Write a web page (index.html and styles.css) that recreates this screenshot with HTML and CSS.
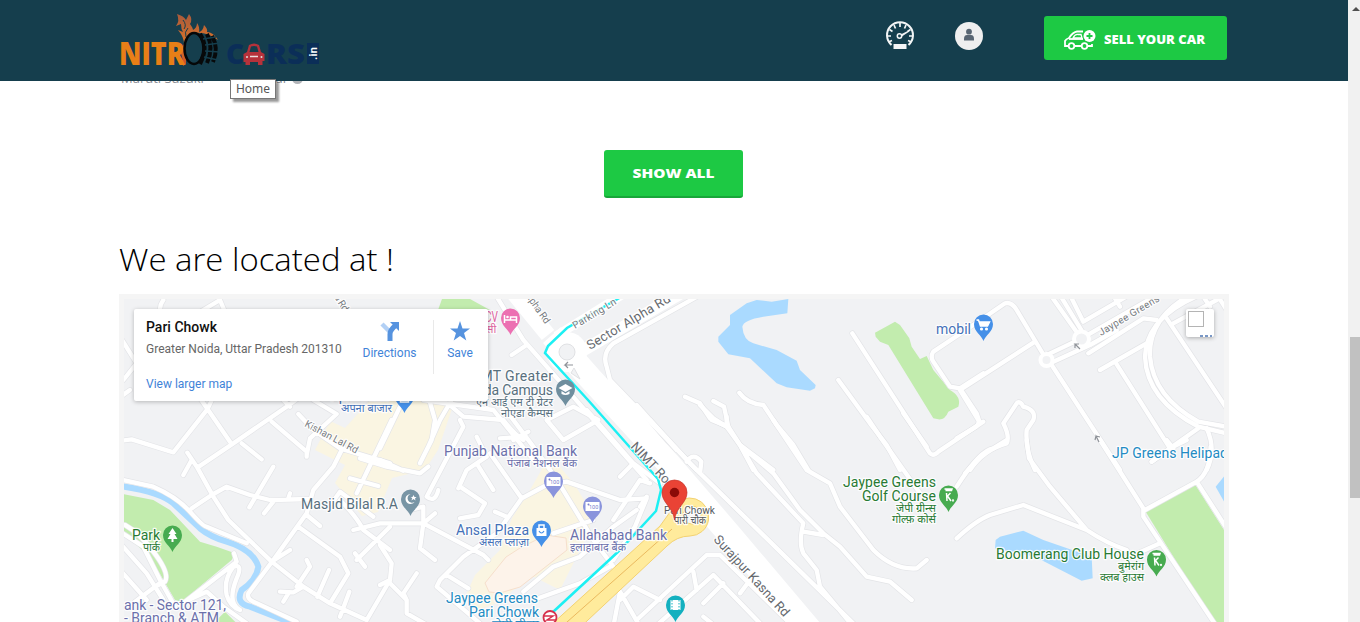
FILE: index.html
```html
<!DOCTYPE html>
<html lang="en">
<head>
<meta charset="utf-8">
<title>Nitro Carse</title>
<link rel="stylesheet" href="styles.css">
</head>
<body>
<div class="window">
<div class="page">
  <header class="header">
    <a class="logo" href="#">
      <svg width="202" height="56" viewBox="118 12 202 56">
        <defs><linearGradient id="fire" x1="0" y1="0" x2="0" y2="1"><stop offset="0" stop-color="#a85a3c"/><stop offset=".6" stop-color="#df7527"/><stop offset="1" stop-color="#c84c25"/></linearGradient></defs>
        <path fill="url(#fire)" d="M183 66Q183 58 180 50L184 44Q184 37 178 30L183 32Q181 29 181 24L176 26Q180 21 177 14Q184 16 186 20L189 14Q193 19 190 24Q193 28 193 30Q197 28 197 23Q200 27 199 32Q203 31 204 25Q208 29 207 32Q213 32 218 40Q206 31 194 33Q187 37 186 48V64Z"/>
        <path fill="none" stroke="#153e4d" stroke-width="1" d="M183 20Q187 25 184 29M186 37Q184 32 188 28"/>
        <text class="logo-nitro" x="119" y="64.500" textLength="66" lengthAdjust="spacingAndGlyphs">NITR</text>
        <ellipse cx="194" cy="48.500" rx="9.500" ry="15.500" class="tyre"/>
        <path class="tread" d="M200 34Q209 47 200 64M207 34Q214 48 207 63M212 36Q219 48 213 62"/>
        <path class="tread-cut" d="M203 39L216 37M205 45L220 43M205 51L220 52M204 57L218 60"/>
        <text class="logo-carse" x="226" y="63.500" textLength="18" lengthAdjust="spacingAndGlyphs">C</text>
        <text class="logo-carse" x="266" y="63.500" textLength="39" lengthAdjust="spacingAndGlyphs">RS</text>
        <path d="M307 43H319V64H307Z" fill="#0b2e58"/>
        <path fill="#b6323b" d="M247 52L249 45Q254 42 259 45L261 52 264.500 54V61H262.500V65H258V62H250V65H245.500V62H243.500V54Z"/>
        <path fill="#173e4d" d="M249.500 52L251 46.500Q254 45.500 257 46.500L258.500 52Z"/>
        <path d="M250 56.500H258" stroke="#edd" stroke-width="1.500"/><circle cx="247" cy="57" r="1" fill="#ddd"/><circle cx="261.500" cy="57" r="1" fill="#ddd"/>
        <text class="logo-in" transform="translate(317 60) rotate(-90)" textLength="13">.in</text>
      </svg>
    </a>
    <nav class="tools">
      <svg class="gauge" width="30" height="29" viewBox="0 0 30 29" fill="none" stroke="#f3f5f6">
        <path stroke-width="2" d="M6.500 24A13 13 0 1 1 23.500 24"/>
        <path stroke-width="1.700" d="M2 15H6M4.500 8.500L7.500 10.500M9 4L10.500 7.500M15 2V6M21 4L19.500 7.500M25.500 8.500L22.500 10.500M28 15H24M3.500 21L7 19.500M26.500 21L23 19.500"/>
        <circle cx="14.500" cy="15" r="2.200" stroke-width="1.500"/><path stroke-width="1.300" d="M16 14L24 10M16.500 15L24 10"/>
        <path fill="#f3f5f6" stroke="none" d="M8.500 23H21.500V28H8.500Z"/>
      </svg>
      <svg class="user" width="28" height="28" viewBox="0 0 28 28"><circle cx="14" cy="14" r="14" fill="#efefef"/><circle cx="14" cy="9.700" r="2.900" fill="#596673"/><path fill="#596673" d="M9 17Q9 13 12 13H16Q19 13 19 17V18.500H9Z"/></svg>
      <a class="sell" href="#">
        <svg width="34" height="21" viewBox="0 0 34 21" fill="none" stroke="#fff" stroke-width="1.800">
          <path d="M5 17H2V12Q3 10 6 9Q10 3 14 2.500H20M12 17H18M25 17H29V15"/><path d="M10 9Q12 5 15 5.500H18L19 9Z" stroke-width="1.300"/><path d="M6 10H20"/>
          <circle cx="8.500" cy="17" r="2.800"/><circle cx="21.500" cy="17" r="2.800"/><circle cx="26.500" cy="7" r="6" fill="#fff" stroke="none"/><path stroke="#1dc944" d="M23.500 7H29.500M26.500 4V10"/>
        </svg>
        <svg width="104" height="20" viewBox="0 0 104 20"><text class="button-text" x="0" y="14.500" textLength="101" lengthAdjust="spacingAndGlyphs">SELL YOUR CAR</text></svg>
      </a>
    </nav>
    <span class="tooltip">Home</span>
  </header>
  <main class="main">
    <div class="listing"><span class="make">Maruti Suzuki</span><span class="place">Bazaar</span><i class="dot"></i></div>
    <a class="show-all" href="#"><svg width="84" height="20" viewBox="0 0 84 20"><text class="button-text" x="0.500" y="14.700" textLength="82" lengthAdjust="spacingAndGlyphs">SHOW ALL</text></svg></a>
    <h2 class="title"><svg width="290" height="46" viewBox="0 0 290 46"><text x="0" y="33" textLength="275" lengthAdjust="spacingAndGlyphs">We are located at !</text></svg></h2>
    <section class="map">
      <svg class="canvas" width="1100" height="323" viewBox="124 299 1100 323">
        <defs>
          <g id="minor">
            <g transform="translate(110 400) scale(.33333)">
              <path d="M30 123L65 118 190 157 292 28 315 -20M260 -20L360 125M262 203L370 130 530 20 570 -10M520 0L540 20M395 130L455 178M485 65L590 155V170M590 165L600 115 680 42 610 0M565 42L610 90 690 145 840 190M232 158L262 203 310 290 355 360 485 485 580 560 660 610 770 660M220 225L245 180M30 238L130 260Q200 290 240 335T290 380L410 430M245 325L305 285 350 260 420 285 480 300 600 297M418 322L490 200M462 340L490 305M535 295L540 280M700 140L670 200 610 270 590 340 490 480 415 580Q410 595 430 605L560 665M565 380L690 470 715 520 660 610M590 345L630 378M485 485L540 450M560 560L600 500 590 480M510 575L550 577 580 560M535 580L520 605M622 590L657 510M690 650L718 575M770 660L840 540M845 60L740 280M720 235L805 258M665 310L690 275 790 350M690 300Q740 350 760 390L840 450M840 380L740 480M735 460L765 500M225 605L380 485 372 460M45 375Q90 400 130 455Q180 520 165 545L145 555M30 395L100 440 150 540 195 620M30 430L110 520 160 600M30 510L110 600M75 605L155 545M370 500Q340 540 350 585Q360 620 390 630M370 500Q400 490 380 535Q350 610 390 630M235 600L290 575 340 620 410 670"/>
              <path d="M160 -300Q130 -260 190 -220M330 -300L380 -180M230 -240L330 -300M30 -190L80 -110 40 -60M-10 20L60 -30"/>
            </g>
            <g transform="translate(380 400) scale(.33333)">
              <path d="M145 -10L165 60 155 120 120 190M240 60L250 80 140 290Q165 310 175 270M215 0L180 60 145 140M215 20L250 50 370 60Q400 100 430 120M60 20L0 145M0 180L70 212M-60 175L20 200 120 220 145 200M360 115L430 110M370 20L460 140 525 230 610 370 640 420 700 500M330 160L425 295 350 400 250 470 180 540 170 560 300 670M290 110L320 170 260 210 235 265M240 260L315 310 295 345 240 355M290 190L340 270M425 295L500 255 560 245 720 300 800 295 765 380 700 480M345 335L380 350M-80 390L0 370 130 370 310 465 325 480M130 370L165 340M130 370L120 445 165 480M90 330L130 320 130 370M0 435L35 490 30 540 0 555M30 550L80 600 70 580 110 520M80 600L80 640 150 680M200 525L265 565M500 60L550 120 655 60 580 20 500 60M620 30L760 190 840 250M720 230L760 190M430 575L520 500 600 470 700 380 770 330M460 600L600 550 690 500M700 680L720 575 780 680M720 600L760 560 840 600M520 400L580 380 640 360"/>
            </g>
            <g transform="translate(480 290) scale(.33333)">
              <path d="M50 20L130 150 350 400 500 570M95 195L140 165M660 15L400 160Q365 190 380 230L390 270 650 540M470 345L590 480M615 320L660 340 690 385 740 410M-170 330L40 360 80 410 160 510M100 450L145 425"/>
            </g>
            <g transform="translate(700 290) scale(.33333)">
              <path d="M0 345L40 385 80 410 120 465 160 540M120 465L220 540M40 333L72 350 85 410M118 308Q140 340 190 345L230 405 280 465 325 540M415 270L510 400 560 465 600 540M457 130L690 490Q700 500 715 485L850 395M820 105L700 185Q690 200 700 215L750 290 780 295 850 250M780 295L830 370 840 400M795 550L840 500"/>
            </g>
            <g transform="translate(960 290) scale(.33333)">
              <path d="M0 300L225 155M40 105L135 40Q155 35 170 60L260 210M250 200L365 145 600 10M270 220L390 165 470 120M275 225L480 540M275 20L360 140M330 15L370 95 550 -10M300 15L370 130M385 190L550 85 590 90M480 50L465 25M420 240L560 160M465 215L630 475 715 415M575 515L630 475M620 85L800 355M640 100L770 30M730 20L750 50M775 20L800 60M740 415Q770 480 740 540M0 300L55 390Q60 405 40 415L-10 445M30 540Q70 480 140 460Q150 440 130 400L170 340Q180 330 190 350Q230 360 220 390L200 420Q195 480 225 540"/>
              <path d="M720 15Q560 80 555 200Q560 330 715 410L800 430M690 15Q565 85 570 200Q580 320 715 395L800 410"/>
            </g>
            <g transform="translate(960 440) scale(.33333)">
              <path d="M-10 140Q60 30 100 25L140 0M200 0L207 55 270 140 380 270M-10 295Q50 240 90 225L190 195 380 270Q440 310 500 330M500 355L600 310M420 0L550 205V230L770 560M555 210L710 125Q750 100 752 20M710 125L800 265M575 65L640 20 680 0M620 0L640 25"/>
            </g>
            <g transform="translate(640 420) scale(.33333)">
              <path d="M215 0L265 20 300 75 350 160 490 310Q475 370 490 400L530 450 540 500 640 620M260 -10V15M300 75L400 160 480 270 550 340 600 380 680 470 750 485 815 540M490 335L550 345M400 0L500 150 570 190 600 260 700 390Q760 450 830 445L860 420M680 -10L720 50 840 220M790 -20L860 80M-10 600L200 405H240L460 620M50 616L220 465 370 620M160 455L170 510M250 490L190 550M330 480L300 520M190 590L240 630M30 0L150 130 650 620M85 90L-40 -60M180 160L184 125Q160 95 140 125M-80 300L0 180 30 190M0 260L20 230"/>
            </g>
          </g>
          <g id="major">
            <path stroke-width="16" d="M508 286L548 335"/>
            <path stroke-width="24" d="M552 335L590 378 668 463 730 535 812 632"/>
            <path stroke-width="12" d="M570 358L690 288"/>
            <path stroke-width="9" d="M556 336L625 293"/>
          </g>
          <path id="pin" d="M0 14C-2 8 -9.500 5 -9.500 -3A9.500 9.500 0 1 1 9.500 -3C9.500 5 2 8 0 14Z"/>
        </defs>
        <rect x="124" y="299" width="1100" height="323" fill="#f1f2f4"/>
        <g fill="#faf5e2">
          <path d="M330 421L345 428 370 400H455L438 450 425 470 392 478 378 512 362 516 335 483 345 465 315 450Z"/>
          <path d="M550 455L575 485 590 510 590 530 560 590 530 575 500 602 478 610 466 595 475 575 500 550 512 518 530 490Z"/>
        </g>
        <g fill="#c2ecae">
          <path transform="translate(110 400) scale(.33333)" d="M40 282L130 300 180 330 270 425 320 440 375 460 365 480 215 605 195 600 120 470 40 400ZM310 670L345 635 380 670Z"/>
          <path d="M438 310L442 299H470L490 310Z"/>
          <path transform="translate(700 290) scale(.33333)" d="M525 128L585 95 600 105 628 145 635 170 660 207 680 198 700 240 750 300Q785 320 775 350L745 365Q735 390 715 388L700 385 565 165 540 155 527 140Z"/>
          <path transform="translate(960 440) scale(.33333)" d="M557 215L705 133 795 275V546H760Z"/>
        </g>
        <g fill="#aadaff">
          <path transform="translate(700 290) scale(.33333)" d="M265 27L262 70 190 80Q130 90 127 110Q130 150 160 160L230 180 290 212 300 240 347 285 345 295 330 302 260 292 230 280 150 205 85 193 55 155V140L90 105V75L140 40 170 30 215 35Z"/>
          <path transform="translate(960 440) scale(.33333)" d="M105 325L107 300 120 290 190 272 250 300 395 350 398 415 365 422 225 350ZM767 140L795 106V190Z"/>
        </g>
        <path class="river" transform="translate(110 400) scale(.33333)" d="M30 258Q150 275 190 310L270 385Q300 410 350 425Q430 450 445 500Q440 540 395 570Q375 610 420 620L560 675"/>
        <path fill="#fdf3ea" stroke="#f6dfcc" d="M485 583L506 557 520 548 546 535 566 538 567 550 520 587 500 593 489 592Z"/>
        <use href="#minor" class="casing"/>
        <use href="#minor" class="road"/>
        <g class="avenue"><use href="#major"/><circle cx="567" cy="352" r="20" fill="#fff" stroke="none"/></g>
        <circle cx="567" cy="352" r="8" class="island"/>
        <path d="M574 368L580 379 571 373Z" class="island"/>
        <circle cx="1046.500" cy="360" r="6" class="ring"/><circle cx="1081.500" cy="339" r="7.500" class="ring"/>
        <path fill="#ffeb9c" stroke="#f3d272" d="M540 635L660 526 673 508A19 19 0 1 1 690 536Q677 536 667 546L572 635Z"/>
        <circle cx="692" cy="515" r="9" fill="#f4f4f2" stroke="#f3d272"/>
        <path fill="none" stroke="#eab95f" d="M672 529L558 630"/>
        <path class="route" d="M621 297L567 328 548 346 545 353 588 400 658 479 661 490 656 511 620 550 553 612"/>
        <g fill="none" stroke="#8f9399" stroke-width="1.200"><path d="M573 365H565L568 362M565 365L568 368M1080 349L1075 344H1079M1075 344V348M1099 442L1096 436 1095 440M1096 436L1100 437"/></g>

        <g class="labels">
          <g class="street">
            <text transform="translate(304 426) rotate(28)" textLength="59">Kishan Lal Rd</text>
            <text transform="translate(334 297) rotate(58)" textLength="18">a Rd</text>
            <text transform="translate(524 294) rotate(55)" textLength="37">Alpha Rd</text>
            <text transform="translate(575 329) rotate(-31)" textLength="49">Parking Ln</text>
            <text transform="translate(1101 336) rotate(-31)" textLength="69">Jaypee Greens</text>
          </g>
          <g class="avenue-name">
            <text transform="translate(590 350) rotate(-31)" textLength="95">Sector Alpha Rd</text>
            <text transform="translate(630 447) rotate(47)" textLength="66">NIMT Road</text>
            <text transform="translate(713 540) rotate(47.500)" textLength="105">Surajpur Kasna Rd</text>
          </g>
          <g fill="#58707e">
            <text x="301" y="509" textLength="97">Masjid Bilal R.A</text>
            <text x="466" y="381" textLength="87">NIMT Greater</text>
            <text x="463" y="395" textLength="90">Noida Campus</text>
            <text class="hi" x="476" y="406" textLength="77" lengthAdjust="spacingAndGlyphs">एन आई एम टी ग्रेटर</text>
            <text class="hi" x="501" y="417" textLength="52" lengthAdjust="spacingAndGlyphs">नोएडा कैम्पस</text>
          </g>
          <g fill="#6b70ab">
            <text x="444" y="456" textLength="133">Punjab National Bank</text>
            <text class="hi" x="507" y="466.500" textLength="70" lengthAdjust="spacingAndGlyphs">पंजाब नैशनल बैंक</text>
            <text x="570" y="540" textLength="97">Allahabad Bank</text>
            <text class="hi" x="570" y="550.500" textLength="56" lengthAdjust="spacingAndGlyphs">इलाहाबाद बैंक</text>
            <text x="124" y="610" textLength="102">ank - Sector 121,</text>
            <text x="124" y="623" textLength="95">- Branch &amp; ATM</text>
          </g>
          <g fill="#4471b8">
            <text x="331" y="401" textLength="60">Apna Bazar</text>
            <text class="hi" x="341" y="411.500" textLength="51" lengthAdjust="spacingAndGlyphs">अपना बाजार</text>
            <text x="456" y="535" textLength="73">Ansal Plaza</text>
            <text class="hi" x="479" y="545.500" textLength="50" lengthAdjust="spacingAndGlyphs">अंसल प्लाज़ा</text>
            <text x="936" y="334" textLength="35">mobil</text>
          </g>
          <g fill="#238bc3">
            <text x="446" y="603" textLength="92">Jaypee Greens</text>
            <text x="469" y="617" textLength="70">Pari Chowk</text>
            <text class="hi" x="492" y="628" textLength="47" lengthAdjust="spacingAndGlyphs">जेपी ग्रीन्स</text>
            <text x="1112" y="458" textLength="116">JP Greens Helipad</text>
          </g>
          <g fill="#287a33">
            <text x="132" y="540" textLength="28">Park</text>
            <text class="hi" x="143" y="550.500" textLength="17" lengthAdjust="spacingAndGlyphs">पार्क</text>
            <text x="843" y="487" textLength="93">Jaypee Greens</text>
            <text x="862" y="501" textLength="74">Golf Course</text>
            <text class="hi" x="896" y="512" textLength="40" lengthAdjust="spacingAndGlyphs">जेपी ग्रीन्स</text>
            <text class="hi" x="892" y="523" textLength="44" lengthAdjust="spacingAndGlyphs">गोल्फ़ कोर्स</text>
            <text x="996" y="559" textLength="148">Boomerang Club House</text>
            <text class="hi" x="1118" y="569.500" textLength="26" lengthAdjust="spacingAndGlyphs">बुमेरांग</text>
            <text class="hi" x="1100" y="580.500" textLength="44" lengthAdjust="spacingAndGlyphs">क्लब हाउस</text>
          </g>
          <g fill="#dd63a0"><text x="485" y="322" textLength="13" lengthAdjust="spacingAndGlyphs">CV</text><text class="hi" x="486" y="333">सी</text></g>
          <g fill="#555a5f"><text class="small" x="664" y="514" textLength="51" lengthAdjust="spacingAndGlyphs">Pari Chowk</text><text class="hi" x="674" y="523.500" textLength="32" lengthAdjust="spacingAndGlyphs">पारी चौक</text></g>
        </g>

        <g class="icon-line">
          <g transform="translate(172.500 538)"><use href="#pin" fill="#47ab50"/><path fill="#fff" stroke="none" d="M0 -10L4 -4H2L5 1H1V4H-1V1H-5L-2 -4H-4Z"/></g>
          <g transform="translate(410.500 502)"><use href="#pin" fill="#7895a5"/><path fill="#fff" stroke="none" d="M0 -8A5 5 0 1 0 4 0A4.500 4.500 0 1 1 0 -8M3 -7L4 -5 6 -5 4.500 -3.500 5 -1.500 3 -3 1 -1.500 1.700 -4 0 -5H2Z"/></g>
          <g transform="translate(404.500 399)"><use href="#pin" fill="#4590e8"/><path d="M-4 -1V3H4V-1"/></g>
          <g transform="translate(510.500 321)"><use href="#pin" fill="#ec70b2"/><path d="M-6 -6V2M-6 -1H6V2M6 -1V-4H0V-1"/><circle cx="-3" cy="-4" r="1.300" fill="#fff" stroke="none"/></g>
          <g transform="translate(565.500 392)"><use href="#pin" fill="#6f8e9e"/><path fill="#fff" stroke="none" d="M0 -8L7 -4 0 0 -7 -4ZM-4 -1L0 1.500 4 -1V2Q0 4 -4 2Z"/></g>
          <g transform="translate(553.500 484)"><use href="#pin" fill="#8a94dc"/><path fill="#fff" stroke="none" d="M-7 -7H7V2H-7Z"/><text class="note" x="-3.500" y="0">100</text><circle cx="-4" cy="-4.500" r="1" fill="#7780cc" stroke="none"/></g>
          <g transform="translate(592.500 509)"><use href="#pin" fill="#8a94dc"/><path fill="#fff" stroke="none" d="M-7 -7H7V2H-7Z"/><text class="note" x="-3.500" y="0">100</text><circle cx="-4" cy="-4.500" r="1" fill="#7780cc" stroke="none"/></g>
          <g transform="translate(541.500 533)"><use href="#pin" fill="#4590e8"/><path fill="#fff" stroke="none" d="M-5 -5H5V3H-5Z"/><path d="M-2.500 -4V-8H2.500V-4"/><path stroke="#4590e8" stroke-width="1.200" d="M-2.500 -2Q0 2 2.500 -2"/></g>
          <g transform="translate(983.500 327)"><use href="#pin" fill="#4590e8"/><path fill="#fff" d="M-7 -7H-5L-3 -1H4L6 -5H-4"/><circle cx="-2" cy="2" r=".8"/><circle cx="3" cy="2" r=".8"/></g>
          <g transform="translate(948.500 498)"><use href="#pin" fill="#47ab50"/><path d="M-4 -9H3.500L3 -7.500H-3M-2 -5L-1.500 3M2 -5L-1 -2 2.500 3" /><circle cx="4.500" cy="2.500" r=".4"/></g>
          <g transform="translate(1156.500 562.500)"><use href="#pin" fill="#47ab50"/><path d="M-4 -9H3.500L3 -7.500H-3M-2 -5L-1.500 3M2 -5L-1 -2 2.500 3"/><circle cx="4.500" cy="2.500" r=".4"/></g>
          <g transform="translate(675.500 608)"><use href="#pin" fill="#13b0bf"/><path fill="#fff" stroke="none" d="M-5 -8H5V2H-5Z"/><path stroke="#13b0bf" stroke-dasharray="1.500 1.500" stroke-width="1" d="M-3.500 -8V2M3.500 -8V2"/></g>
          <circle cx="550" cy="617.500" r="6.500" fill="#fff" stroke="#d6304c" stroke-width="1.800"/><path stroke="#d6304c" stroke-width="1.500" d="M544 616H553L547 620H556"/>
        </g>
        <path fill="#ea4335" stroke="#c5352b" stroke-width=".7" d="M674.500 520C673 507 662 503 662 492.500A12.500 12.500 0 1 1 687 492.500C687 503 676 507 674.500 520Z"/>
        <circle cx="674.500" cy="492.500" r="4.700" fill="#8b0b08"/>
      </svg>
      <div class="card">
        <div class="place-info">
          <strong>Pari Chowk</strong>
          <p>Greater Noida, Uttar Pradesh 201310</p>
          <a href="#">View larger map</a>
        </div>
        <div class="action directions">
          <svg width="22" height="22" viewBox="0 0 22 22"><path d="M3 4L11 12" stroke="#b2d0f5" stroke-width="4.500"/><path d="M11 21V14Q11 10 17 5" fill="none" stroke="#5693df" stroke-width="5"/><path fill="#5693df" d="M11 2H20V11Z"/></svg>
          <span>Directions</span>
        </div>
        <div class="action save">
          <svg width="22" height="22" viewBox="0 0 22 22"><path fill="#5693df" d="M11 1L13.500 8.500H21L15 13 17.300 20.500 11 16 4.700 20.500 7 13 1 8.500H8.500Z"/></svg>
          <span>Save</span>
        </div>
      </div>
      <div class="layer"><i class="box"></i><i class="dashes"></i></div>
    </section>
  </main>
</div>
<aside class="scrollbar"><i class="arrow"></i><i class="thumb"></i></aside>
</div>
</body>
</html>
```

FILE: styles.css
```css
* { box-sizing: border-box; }
body { margin: 0; overflow: hidden; background: #fff; font-family: Roboto, "Noto Sans", sans-serif; }
a { color: inherit; text-decoration: none; }
svg { display: block; }
.window { display: flex; height: 622px; overflow: hidden; }
.page { width: 1348px; height: 622px; overflow: hidden; }

.header { position: relative; z-index: 2; display: flex; justify-content: space-between; height: 81px; padding: 0 121px 0 118px; background: #153e4d; }
.logo { padding-top: 12px; }
.logo-nitro { font: 800 31px "Open Sans", sans-serif; fill: #e87f17; }
.logo-carse { font: 800 29px "Open Sans", sans-serif; fill: #0b2e58; }
.logo-in { font: 700 11px Roboto, sans-serif; fill: #fff; }
.tyre { fill: #153e4d; stroke: #050708; stroke-width: 2.500; }
.tread { fill: none; stroke: #07090a; stroke-width: 4; }
.tread-cut { stroke: #153e4d; stroke-width: 1.500; }
.tools { display: flex; align-items: flex-start; }
.gauge { margin: 21px 40px 0 0; }
.user { margin: 22px 61px 0 0; }
.sell { display: flex; align-items: center; gap: 7px; width: 183px; height: 44px; margin-top: 16px; padding: 2px 0 0 19px; border-radius: 3px; background: #1dc944; }
.button-text { font: 800 13px "Open Sans", sans-serif; fill: #fff; }
.tooltip { position: absolute; left: 230px; top: 79px; width: 46px; height: 20px; border: 1px solid #777; background: #fff; box-shadow: 3px 3px 2px rgba(0,0,0,.4); color: #555; font: 12px/18px "Noto Sans", sans-serif; text-align: center; }

.main { padding: 0 120px 0 119px; }
.listing { display: flex; height: 5px; overflow: hidden; color: #8a8d94; font: 13px/16px "Open Sans", sans-serif; }
.listing span { margin-top: -11px; }
.make { width: 115px; padding-left: 2px; }
.place { width: 58px; text-align: right; padding-right: 4px; }
.dot { width: 11px; height: 11px; margin-top: -8px; border-radius: 50%; background: #b2b4b8; }
.show-all { display: flex; align-items: center; justify-content: center; width: 139px; height: 48px; margin: 64px auto 0 485px; border-radius: 3px; border-bottom: 2px solid #18a639; background: #1dc944; }
.title { height: 96px; margin: 0; padding-top: 40px; font: 300 32px "Open Sans", sans-serif; fill: #000; }
.map { position: relative; width: 1110px; height: 333px; padding: 5px; background: #f5f5f5; }
.canvas { overflow: hidden; }

.casing { fill: none; stroke: #e3e4e7; stroke-width: 17px; stroke-linecap: round; stroke-linejoin: round; }
.road { fill: none; stroke: #fff; stroke-width: 13px; stroke-linecap: round; stroke-linejoin: round; }
.avenue { fill: none; stroke: #fff; stroke-linejoin: round; }
.island { fill: #f1f2f4; stroke: #e0e1e4; }
.ring { fill: #f1f2f4; stroke: #fff; stroke-width: 4; }
.river { fill: none; stroke: #aadaff; stroke-width: 18; }
.route { fill: none; stroke: #1cf0f3; stroke-width: 2.500; }
.labels { font: 14px Roboto, sans-serif; stroke: #fff; stroke-width: 2.500; stroke-opacity: .85; paint-order: stroke; stroke-linejoin: round; }
.hi { font: 11px "Noto Sans", "Noto Sans Devanagari", sans-serif; }
.small { font-size: 11px; }
.street { font-size: 10px; fill: #777b80; }
.avenue-name { font-size: 13px; fill: #666a6f; }
.icon-line { fill: none; stroke: #fff; stroke-width: 1.500; }
.icon-line use { stroke: none; }
.note { font: 5.500px Roboto, sans-serif; fill: #7780cc; stroke: none; }

.card { position: absolute; left: 15px; top: 15px; display: flex; width: 354px; height: 92px; border-radius: 2px; background: #fff; box-shadow: 0 1px 4px rgba(0,0,0,.25); font-size: 12px; color: #5693df; }
.place-info { width: 212px; padding: 10px 0 0 12px; white-space: nowrap; }
.place-info strong { display: block; color: #111; font: 500 14px/17px Roboto, sans-serif; }
.place-info p { margin: 6px 0 21px; color: #666; line-height: 14px; }
.place-info a, .action span { color: #3f83d8; line-height: 14px; }
.place-info a { display: block; }
.action { display: flex; flex-direction: column; align-items: center; gap: 4px; height: 54px; margin-top: 11px; }
.directions { width: 87px; }
.save { width: 53px; border-left: 1px solid #e9e9e9; }
.layer { position: absolute; right: 15px; top: 15px; width: 28px; height: 28px; padding: 2px; overflow: hidden; border-radius: 2px; background: #fff; box-shadow: 0 1px 4px rgba(0,0,0,.3); }
.box { display: block; width: 16px; height: 16px; border: 1px solid #b4b4b4; }
.dashes { display: block; width: 12px; height: 2px; margin: 8px 0 0 12px; background: repeating-linear-gradient(90deg, #7997c5 0 3px, #fff 3px 5px); }

.scrollbar { width: 12px; height: 622px; padding-top: 7px; overflow: hidden; background: #f1f1f1; }
.arrow { display: block; width: 8px; margin-left: 4px; border: 4px solid transparent; border-top: 0; border-bottom-color: #505050; }
.thumb { display: block; height: 161px; margin: 326px 0 0 2px; background: #c1c1c1; }
```
